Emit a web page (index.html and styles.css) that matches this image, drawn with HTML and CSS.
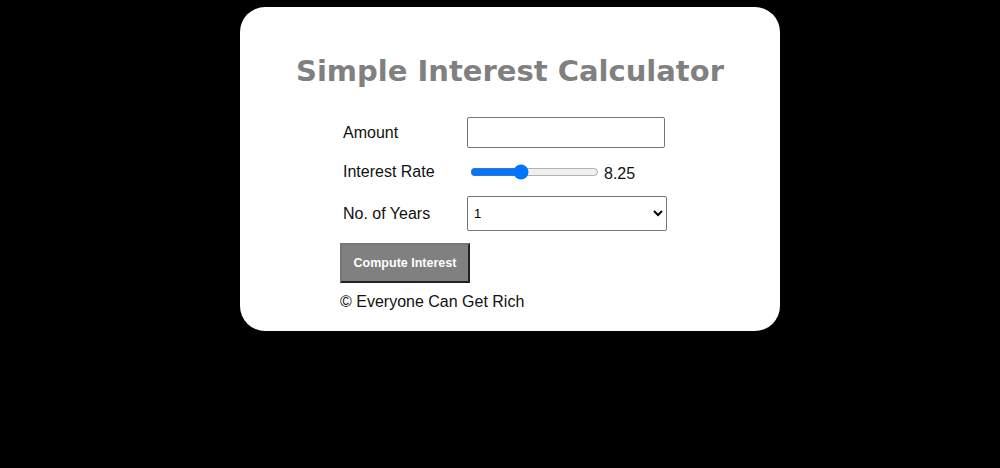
FILE: index.html
```html
<!DOCTYPE html>
<html lang="en">
<head>
    <meta charset="UTF-8">
    <meta name="viewport" content="width=device-width, initial-scale=1.0">
    <title>Simple Interest Calculator</title>
    <link rel="stylesheet" href="styles.css">
</head>
<body>
    <div class="maindiv">
        <h1>Simple Interest Calculator</h1>
        <div class="form">
            <div class="row">
                <label for="principal">Amount</label>
                <input type="number" id="principal" class="amount">
            </div>
            <div class="row">
                <label for="rate">Interest Rate</label>
                <div class="rate-box">
                    <input type="range" id="rate" min="1" max="20" step="0.25" value="8.25" oninput="updateRate()">
                    <span id="rate_val">8.25</span>
                </div>
            </div>
            <div class="row">
                <label for="years">No. of Years</label>
                <select id="years" class="years">
                    <option value="1">1</option>
                    <option value="2">2</option>
                    <option value="3">3</option>
                    <option value="4">4</option>
                    <option value="5">5</option>
                    <option value="6">6</option>
                    <option value="7">7</option>
                    <option value="8">8</option>
                    <option value="9">9</option>
                    <option value="10">10</option>
                </select>
            </div>
            <button class="compute" onclick="compute()">Compute Interest</button>
            <p id="result" class="result"></p>
            <div class="footer">&copy; Everyone Can Get Rich</div>
        </div>
    </div>

    <script>
        function updateRate() {
            document.getElementById('rate_val').innerText = document.getElementById('rate').value;
        }

        function compute() {
            const principal = document.getElementById('principal');
            const rate = document.getElementById('rate').value;
            const years = document.getElementById('years').value;
            if (principal.value === '' || principal.value <= 0) {
                alert('Enter a positive number');
                principal.focus();
                return;
            }
            const interest = principal.value * years * rate / 100;
            const year = new Date().getFullYear() + parseInt(years);
            document.getElementById('result').innerHTML =
                'If you deposit ' + principal.value + ',<br>at an interest rate of ' + rate +
                '%.<br>You will receive an amount of ' + interest + ',<br>in the year ' + year;
        }
    </script>
</body>
</html>
```

FILE: styles.css
```css
body {
    margin: 0;
    padding-left: 20px;
    background: #000;
    font-family: 'Liberation Sans', Arial, sans-serif;
}
.maindiv {
    background: #fff;
    width: 540px;
    margin: 7px auto 0;
    border-radius: 25px;
    padding: 45px 0 20px;
    box-sizing: border-box;
}
h1 {
    margin: 0 0 27px;
    text-align: center;
    font-family: 'Comic Sans MS', 'DejaVu Sans', sans-serif;
    font-size: 29px;
    line-height: 38px;
    font-weight: bold;
    color: #808080;
}
.form {
    margin-left: 100px;
}
.row {
    display: grid;
    grid-template-columns: 127px auto;
    align-items: center;
    margin-bottom: 9px;
}
.row label {
    padding-left: 3px;
    font-size: 16px;
    color: #111;
}
.amount {
    width: 198px;
    height: 31px;
    box-sizing: border-box;
    border: 1px solid #767676;
    border-radius: 2px;
}
.rate-box {
    display: flex;
    align-items: center;
    height: 30px;
    font-size: 16px;
    color: #111;
}
.rate-box input {
    width: 129px;
    margin: 0 5px 0 3px;
}
.rate-box span {
    padding-top: 4px;
}
.years {
    width: 200px;
    height: 35px;
    font-size: 13px;
    padding-left: 2px;
    border: 1px solid #767676;
    border-radius: 2px;
    background: #fff;
}
.compute {
    margin-top: 3px;
    width: 130px;
    height: 40px;
    background: #808080;
    color: #fff;
    font-family: 'Liberation Sans', Arial, sans-serif;
    font-weight: bold;
    font-size: 12.5px;
    border: 2px solid;
    border-color: #767676 #222 #222 #767676;
    cursor: pointer;
}
.result {
    margin: 0;
}
.footer {
    margin-top: 10px;
    font-size: 16px;
    color: #111;
}
```
